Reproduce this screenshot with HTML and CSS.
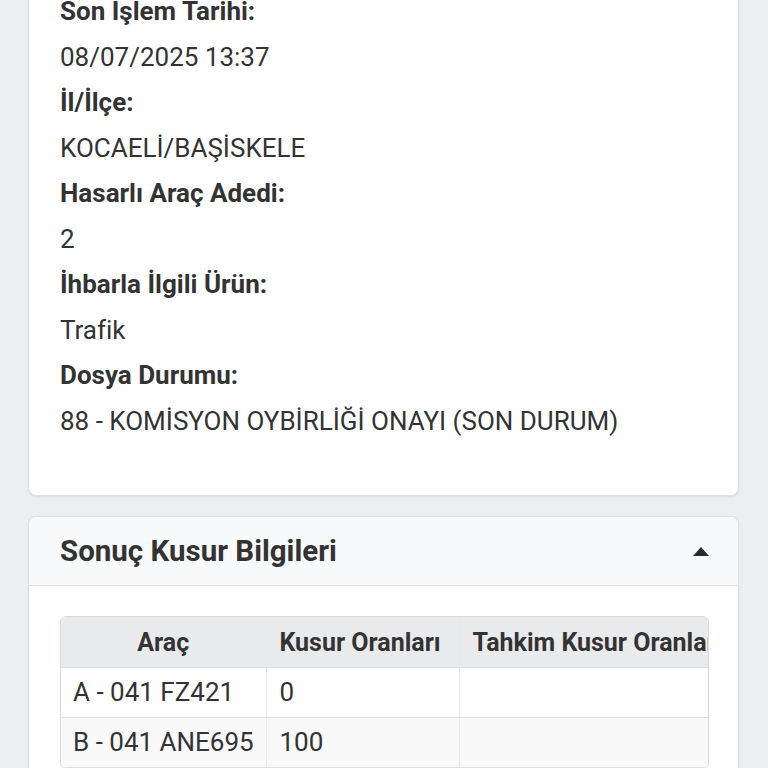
FILE: index.html
```html
<!DOCTYPE html>
<html lang="tr">
<head>
  <meta charset="UTF-8" />
  <meta name="viewport" content="width=device-width, initial-scale=1.0" />
  <title>Hasar Dosyası</title>
  <link rel="stylesheet" href="styles.css">
</head>
<body>

  <div class="page">
    <!-- Dosya bilgileri -->
    <div class="card info-card">
      <dl class="info-list">
        <dt>Son İşlem Tarihi:</dt>
        <dd>08/07/2025 13:37</dd>
        <dt>İl/İlçe:</dt>
        <dd>KOCAELİ/BAŞİSKELE</dd>
        <dt>Hasarlı Araç Adedi:</dt>
        <dd>2</dd>
        <dt>İhbarla İlgili Ürün:</dt>
        <dd>Trafik</dd>
        <dt>Dosya Durumu:</dt>
        <dd>88 - KOMİSYON OYBİRLİĞİ ONAYI (SON DURUM)</dd>
      </dl>
    </div>

    <!-- Sonuç kusur bilgileri -->
    <div class="card">
      <div class="card-header">
        <h2>Sonuç Kusur Bilgileri</h2>
        <span class="caret-up"></span>
      </div>
      <div class="card-body">
        <div class="table-wrap">
          <table class="fault-table">
            <colgroup>
              <col class="col-vehicle">
              <col class="col-rate">
              <col class="col-arbitration">
            </colgroup>
            <thead>
              <tr>
                <th>Araç</th>
                <th>Kusur Oranları</th>
                <th>Tahkim Kusur Oranları</th>
              </tr>
            </thead>
            <tbody>
              <tr>
                <td>A - 041 FZ421</td>
                <td>0</td>
                <td></td>
              </tr>
              <tr>
                <td>B - 041 ANE695</td>
                <td>100</td>
                <td></td>
              </tr>
            </tbody>
          </table>
        </div>
      </div>
    </div>
  </div>

</body>
</html>
```

FILE: styles.css
```css
body {
  margin: 0;
  font-family: Roboto, "Noto Sans", sans-serif;
  background: #eceef1;
  color: #333;
}
.page {
  padding: 0 29px 0 28px;
  overflow: hidden;
}
.card {
  background: #fff;
  border: 1px solid #dcdfe3;
  border-radius: 8px;
  box-shadow: 0 1px 2px rgba(0,0,0,0.08);
  margin-bottom: 20px;
  overflow: hidden;
}
.info-card {
  margin-top: -41.6px;
  padding: 30px 31px 51px;
}
.info-list {
  margin: 0;
  font-size: 26px;
  line-height: 45.5px;
}
.info-list dt {
  font-weight: bold;
}
.info-list dd {
  margin: 0;
}
.card-header {
  display: flex;
  align-items: center;
  justify-content: space-between;
  height: 68px;
  padding: 0 29px 0 31px;
  background: #f8f9fb;
  border-bottom: 1px solid #dfe2e6;
}
.card-header h2 {
  margin: 0;
  font-size: 29.5px;
  line-height: 34px;
  font-weight: bold;
}
.caret-up {
  width: 0;
  height: 0;
  border-left: 8.5px solid transparent;
  border-right: 8.5px solid transparent;
  border-bottom: 9px solid #2b2b2b;
}
.card-body {
  padding: 30px 29px 30px 31px;
}
.table-wrap {
  border: 1px solid #d9dcdf;
  border-radius: 6px;
  overflow: hidden;
}
.fault-table {
  table-layout: fixed;
  width: 720px;
  border-collapse: collapse;
  font-size: 26px;
}
.col-vehicle {
  width: 205px;
}
.col-rate {
  width: 193px;
}
.fault-table th,
.fault-table td {
  padding: 6px 12px;
  line-height: 37px;
  border-right: 1px solid #e6e8eb;
  border-bottom: 1px solid #dcdfe2;
  white-space: nowrap;
  overflow: hidden;
  text-align: left;
}
.fault-table th {
  background: #e9eaec;
  font-size: 25px;
  font-weight: bold;
  padding-top: 7px;
}
.fault-table th:first-child {
  text-align: center;
}
.fault-table th + th,
.fault-table td + td {
  padding-left: 13px;
}
.fault-table tbody tr:nth-child(even) td {
  background: #f9f9f9;
}
```
